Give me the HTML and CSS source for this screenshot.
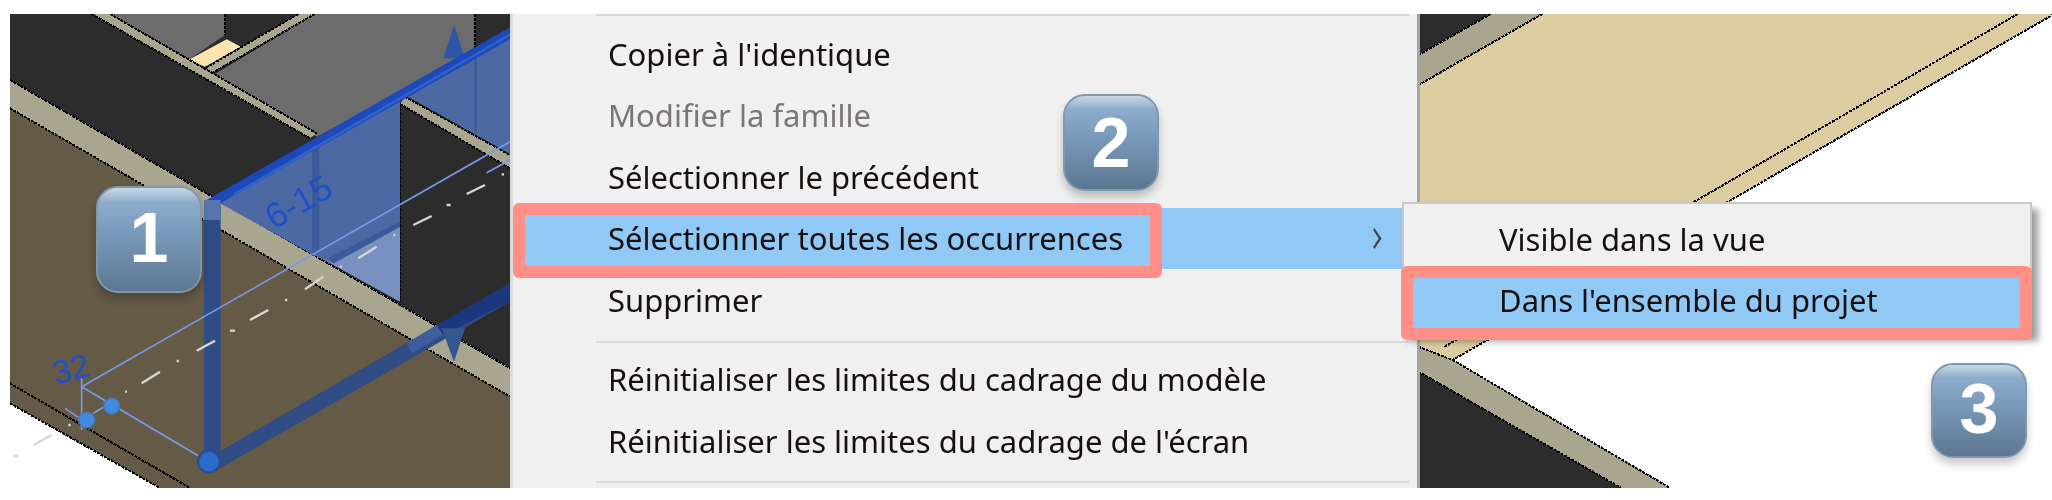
FILE: index.html
```html
<!DOCTYPE html>
<html lang="fr">
<head>
<meta charset="utf-8">
<title>Sélectionner toutes les occurrences</title>
<link rel="stylesheet" href="styles.css">
</head>
<body>
<main class="stage">
  <svg class="scene" width="2052" height="500" viewBox="0 0 2052 500" aria-hidden="true">
    <defs>
      <clipPath id="clip-left"><rect x="30" y="42" width="1500" height="1422"/></clipPath>
      <clipPath id="clip-right"><rect x="402" y="42" width="1170" height="1422"/></clipPath>
    </defs>
    <g transform="scale(0.33333)" clip-path="url(#clip-left)" class="scene-left">
      <polygon class="dark" points="30,42 1530,42 1530,1105 30,240"/>
      <polygon class="gray" points="330,42 675,42 675,105 565,180 610,200"/>
      <polygon class="dark" points="675,42 895,42 730,135 675,105"/>
      <polygon class="gray" points="945,42 1425,42 1425,150 1215,280 950,410 640,225"/>
      <polygon class="beige" points="275,42 330,42 950,400 930,415"/>
      <polygon class="beige" points="895,42 945,42 635,220 615,205"/>
      <polygon class="cream" points="565,180 680,118 722,140 615,200"/>
      <polygon class="beige" points="1215,290 1530,465 1530,505 1200,312"/>
      <polygon class="beige" points="30,240 1530,1105 1530,1190 30,325"/>
      <polygon class="brown" points="30,325 1530,1190 1530,1464 480,1464 30,1210"/>
      <path class="edge" d="M275 42L930 415M330 42L950 400M895 42L615 205M945 42L635 220M675 42V105M1425 42V150M1215 290L1530 465M1200 312L1530 505M30 240L1530 1105M30 325L1530 1190M30 1150L570 1464M30 1210L480 1464M1200 312V905"/>
      <polygon class="panel" points="660,610 950,430 1200,290 1200,680 1000,790 940,765"/>
      <polygon class="panel-light" points="1000,790 1200,680 1200,905 945,765"/>
      <polygon class="panel-edge" points="985,775 1200,665 1200,680 1000,790"/>
      <polygon class="panel" points="1215,285 1530,100 1530,462"/>
      <rect class="panel-edge" x="937" y="440" width="21" height="320"/>
      <rect class="panel-edge" x="1423" y="165" width="7" height="235"/>
      <polygon class="tip" points="1362,75 1330,175 1395,175"/>
      <polygon class="thick" points="620,600 1530,82 1530,118 660,610"/>
      <polygon class="thick-mid" points="700,580 1530,100 1530,108 700,590"/>
      <rect class="post" x="612" y="600" width="50" height="790"/>
      <rect class="post-top" x="612" y="600" width="50" height="60"/>
      <polygon class="post" points="640,1365 1530,850 1530,905 660,1405"/>
      <polygon class="post-mid" points="1220,1030 1310,975 1330,1005 1235,1060"/>
      <polygon class="post-deep" points="1310,975 1530,850 1530,905 1330,1005"/>
      <polygon class="tip-low" points="1325,985 1395,985 1362,1085"/>
      <path class="dash" d="M1240 675L1295 648M1340 615H1352M1400 582L1455 555M1505 523H1512M1075 775L1130 740M1180 705H1186M1020 800H1026M915 868L970 830M855 900H862M750 960L805 930M690 992H705M590 1052L645 1022M530 1083H537M425 1150L480 1115M375 1175H381M205 1275H212M100 1335L155 1305M40 1368H55"/>
      <path class="thin" d="M245 1160L1530 425M1460 518L1530 480M245 1160L600 1370M245 1130V1290M195 1225L240 1255M280 1240L330 1210"/>
      <circle class="grip" cx="335" cy="1218" r="24"/>
      <circle class="grip" cx="260" cy="1260" r="24"/>
      <circle class="grip-big" cx="627" cy="1385" r="33"/>
      <text class="dim dim-long" transform="translate(822,690) rotate(-30)">6-15</text>
      <text class="dim" transform="translate(168,1155) rotate(-15)">32</text>
    </g>
    <g transform="translate(1200,0) scale(0.5434,0.33333)" clip-path="url(#clip-right)">
      <polygon class="dark" points="402,42 535,42 402,165"/>
      <polygon class="beige" points="535,42 630,42 402,255 402,165"/>
      <polygon class="tan" points="630,42 1572,42 465,1080 402,1040 402,255"/>
      <polygon class="beige" points="402,1040 465,1080 865,1464 775,1464 402,1115"/>
      <polygon class="dark" points="402,1115 775,1464 402,1464"/>
      <path class="edge" d="M535 42L402 165M630 42L402 255M1505 42L450 1040M1572 42L465 1080M402 1040L465 1080M465 1080L865 1464M402 1115L775 1464"/>
    </g>
  </svg>

  <nav class="menu">
    <ul class="menu-group">
      <li class="item">Copier à l'identique</li>
      <li class="item item-off">Modifier la famille</li>
      <li class="item">Sélectionner le précédent</li>
      <li class="item item-on">Sélectionner toutes les occurrences<span class="chevron"></span></li>
      <li class="item">Supprimer</li>
    </ul>
    <ul class="menu-group">
      <li class="item">Réinitialiser les limites du cadrage du modèle</li>
      <li class="item">Réinitialiser les limites du cadrage de l'écran</li>
    </ul>
  </nav>

  <ul class="submenu">
    <li class="item">Visible dans la vue</li>
    <li class="item item-on">Dans l'ensemble du projet</li>
  </ul>

  <div class="mark mark-parent"></div>
  <div class="mark mark-child"></div>

  <div class="badge badge-1"><span class="digit">1</span></div>
  <div class="badge badge-2"><span class="digit">2</span></div>
  <div class="badge badge-3"><span class="digit">3</span></div>
</main>
</body>
</html>
```

FILE: styles.css
```css
* { box-sizing: border-box; }
html, body { margin: 0; background: #fff; }
ul { list-style: none; margin: 0; padding: 0; }

.stage {
  position: relative;
  width: 2052px;
  height: 500px;
  padding: 14px 0 12px 510px;
  overflow: hidden;
  font-family: "Noto Sans", "Open Sans", sans-serif;
  color: #17100f;
}

.scene { position: absolute; left: 0; top: 0; }
.scene-left { filter: blur(0.4px); }
.dark { fill: #2c2c2c; }
.gray { fill: #6c6c6c; }
.beige { fill: #a9a68f; }
.cream { fill: #ffe5ad; }
.brown { fill: #645a46; }
.tan { fill: #dbcd9f; }
.edge { fill: none; stroke: #000; stroke-width: 2px; vector-effect: non-scaling-stroke; shape-rendering: crispEdges; stroke-dasharray: 3 1; }
.panel { fill: #4d69a3; }
.panel-light { fill: #7a90c0; }
.panel-edge { fill: #3c5a99; }
.tip { fill: #2f55a8; }
.tip-low { fill: #36568f; }
.thick { fill: #1c49b9; }
.thick-mid { fill: #3061cc; }
.post { fill: #2f4c85; }
.post-top { fill: #5a75ab; }
.post-mid { fill: #3e5d9b; }
.post-deep { fill: #1b3780; }
.dash { fill: none; stroke: #d8d8d0; stroke-width: 7; }
.thin { fill: none; stroke: #7a9aea; stroke-width: 5; }
.grip { fill: #3f8be0; stroke: #50759f; stroke-width: 4; }
.grip-big { fill: #2a6bcb; stroke: #2f4c85; stroke-width: 7; }
.dim { font-family: "Liberation Sans", sans-serif; font-size: 100px; fill: #1f50c8; }
.dim-long { font-size: 106px; }

.menu {
  position: relative;
  width: 910px;
  height: 474px;
  background: #f0f0f0;
  border-left: 3px solid #dcdcdc;
  border-right: 3px solid #a5a5a5;
}
.menu-group {
  padding: 9px 8px 10px 0;
  position: relative;
}
.menu-group::before {
  content: "";
  position: absolute;
  left: 83px;
  right: 8px;
  top: 0;
  height: 2px;
  background: #d9d9d9;
}
.menu-group + .menu-group { padding-top: 8px; }
.menu-group + .menu-group::after {
  content: "";
  position: absolute;
  left: 83px;
  right: 8px;
  bottom: -1px;
  height: 2px;
  background: #d9d9d9;
}

.item {
  display: flex;
  align-items: center;
  height: 61.5px;
  padding-left: 95px;
  font-size: 31px;
  white-space: nowrap;
  filter: blur(0.3px);
}
.item-off { color: #7b7676; }
.item-on { background: #90c8f6; position: relative; }
.chevron {
  position: absolute;
  right: 27px;
  top: 23px;
  width: 15px;
  height: 15px;
  border-top: 3px solid #444;
  border-right: 3px solid #444;
  transform: scaleX(0.65) rotate(45deg);
}

.submenu {
  position: absolute;
  left: 1402px;
  top: 202px;
  width: 630px;
  height: 132px;
  padding-top: 4px;
  background: #f0f0f0;
  border: 2px solid #c9c9c9;
  box-shadow: 6px 7px 7px rgba(0, 0, 0, 0.4);
}
.submenu .item { padding-left: 95px; }

.mark {
  position: absolute;
  border: 12px solid #ff8f87;
  border-radius: 6px;
}
.mark-parent { left: 513px; top: 203px; width: 649px; height: 75px; }
.mark-child { left: 1401px; top: 266px; width: 631px; height: 74px; }

.badge {
  position: absolute;
  display: flex;
  align-items: center;
  justify-content: center;
  border-radius: 22px;
  border: 2px solid #7f98ae;
  background: linear-gradient(to bottom, #c9d8e6 0%, #8fadcb 14%, #7b9cbd 40%, #6c8aa8 70%, #5c7691 100%);
  box-shadow: 0 6px 9px rgba(0, 0, 0, 0.22);
  color: #fff;
  font-family: "Liberation Sans", sans-serif;
  font-weight: 700;
  font-size: 70px;
  line-height: 1;
}
.badge-1 { left: 96px; top: 186px; width: 106px; height: 107px; padding-bottom: 4px; }
.badge-2 { left: 1063px; top: 94px; width: 96px; height: 97px; }
.badge-3 { left: 1931px; top: 363px; width: 96px; height: 95px; padding-bottom: 3px; }
```
